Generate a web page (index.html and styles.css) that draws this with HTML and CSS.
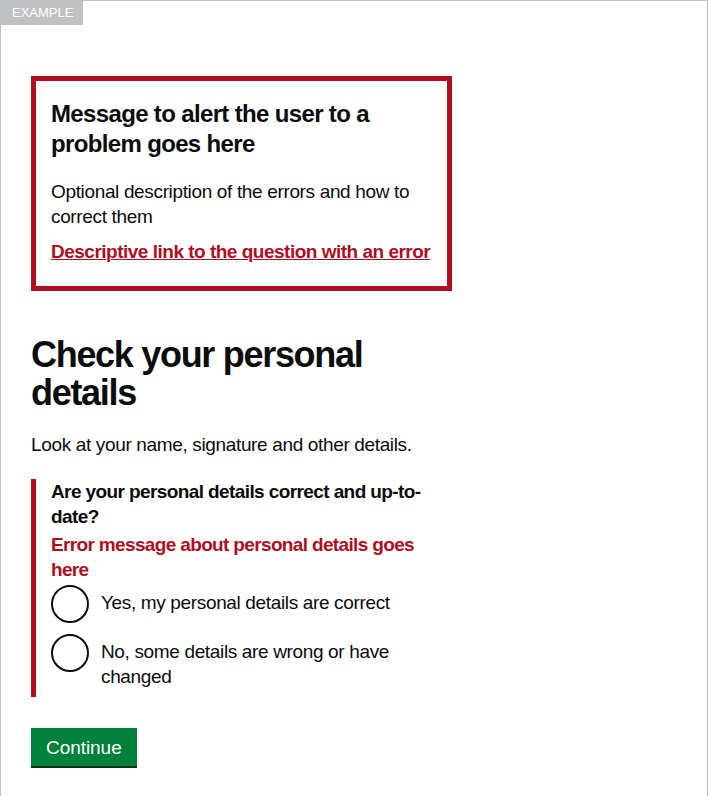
FILE: index.html
```html
<!DOCTYPE html>
<html lang="en">
<head>
<meta charset="utf-8">
<title>Error summary example</title>
<link rel="stylesheet" href="styles.css">
</head>
<body>
<div class="example-frame">
  <div class="example-label">EXAMPLE</div>
  <div class="container">
    <div class="grid-row">
      <div class="column-two-thirds">
        <div class="error-summary" role="alert">
          <h2 class="error-summary__title">Message to alert the user to a problem goes here</h2>
          <p class="error-summary__body">Optional description of the errors and how to correct them</p>
          <ul class="error-summary__list">
            <li><a class="error-summary__link" href="#personal-details">Descriptive link to the question with an error</a></li>
          </ul>
        </div>

        <h1 class="heading-l">Check your personal details</h1>
        <p class="body">Look at your name, signature and other details.</p>

        <div class="form-group form-group--error">
          <fieldset class="fieldset">
            <legend class="fieldset__legend">Are your personal details correct and up-to-date?</legend>
            <span class="error-message">Error message about personal details goes here</span>
            <div class="radios">
              <div class="radios__item">
                <input class="radios__input" id="personal-details" name="personal-details" type="radio" value="yes">
                <label class="radios__label" for="personal-details">Yes, my personal details are correct</label>
              </div>
              <div class="radios__item">
                <input class="radios__input" id="personal-details-2" name="personal-details" type="radio" value="no">
                <label class="radios__label" for="personal-details-2">No, some details are wrong or have changed</label>
              </div>
            </div>
          </fieldset>
        </div>

        <button class="button" type="submit">Continue</button>
      </div>
    </div>
  </div>
</div>
</body>
</html>
```

FILE: styles.css
```css
html, body {
  margin: 0;
  padding: 0;
  background: #ffffff;
  overflow: hidden;
}

body {
  font-family: "Liberation Sans", Arial, sans-serif;
  color: #0b0c0c;
}

.example-frame {
  box-sizing: border-box;
  width: 708px;
  min-height: 100vh;
  border-style: solid;
  border-color: #bfc1c3;
  border-width: 1px 1px 0 1px;
}

.example-label {
  display: block;
  width: max-content;
  height: 24px;
  padding: 0 10px 0 11px;
  background: #bfc1c3;
  color: #ffffff;
  font-size: 13px;
  line-height: 24px;
}

.container {
  padding: 0 30px;
}

.grid-row {
  display: flex;
  margin: 0 -15px;
}

.column-two-thirds {
  box-sizing: border-box;
  width: 66.6667%;
  padding: 0 15px;
}

/* Error summary */
.error-summary {
  margin-top: 51px;
  padding: 18px 15px 22px;
  border: 5px solid #b10e1e;
}

.error-summary__title {
  margin: 0 0 20px;
  font-size: 24px;
  line-height: 30px;
  font-weight: 700;
  letter-spacing: -0.65px;
}

.error-summary__body {
  margin: 0 0 10px;
  font-size: 19px;
  line-height: 25px;
  letter-spacing: -0.35px;
}

.error-summary__list {
  margin: 0;
  padding: 0;
  list-style: none;
  font-size: 19px;
  line-height: 25px;
}

.error-summary__link {
  color: #b10e1e;
  font-weight: 700;
  letter-spacing: -0.5px;
  text-decoration: underline;
  text-decoration-thickness: 1px;
}

/* Headings and body */
.heading-l {
  margin: 45px 0 0;
  font-size: 36px;
  line-height: 38px;
  font-weight: 700;
  letter-spacing: -1.3px;
}

.body {
  margin: 20px 0 0;
  font-size: 19px;
  line-height: 25px;
  letter-spacing: -0.35px;
}

/* Form group */
.form-group {
  margin-top: 22px;
}

.form-group--error {
  padding-left: 15px;
  border-left: 5px solid #b10e1e;
}

.fieldset {
  margin: 0;
  padding: 0;
  border: 0;
  min-width: 0;
}

.fieldset__legend {
  display: block;
  padding: 0;
  font-size: 19px;
  line-height: 25px;
  font-weight: 700;
  letter-spacing: -0.6px;
}

.error-message {
  display: block;
  margin-top: 3px;
  color: #b10e1e;
  font-size: 19px;
  line-height: 25px;
  font-weight: 700;
  letter-spacing: -0.65px;
}

.radios {
  margin-top: 3px;
}

.radios__item {
  display: flex;
  align-items: flex-start;
  margin-bottom: 11px;
}

.radios__item:last-child {
  margin-bottom: 0;
}

.radios__input {
  -webkit-appearance: none;
  appearance: none;
  box-sizing: border-box;
  flex: 0 0 auto;
  width: 38px;
  height: 38px;
  margin: 0;
  border: 2px solid #0b0c0c;
  border-radius: 50%;
  background: transparent;
}

.radios__label {
  display: block;
  padding: 5px 15px 8px 12px;
  font-size: 19px;
  line-height: 25px;
  letter-spacing: -0.35px;
}

/* Button */
.button {
  display: inline-block;
  margin: 31px 0 0;
  padding: 7px 15px 6px;
  border: 0;
  border-radius: 0;
  background: #00823b;
  box-shadow: 0 2px 0 #003618;
  color: #ffffff;
  font-family: "Liberation Sans", Arial, sans-serif;
  font-size: 19px;
  line-height: 25px;
  letter-spacing: -0.05px;
  cursor: pointer;
}
```
